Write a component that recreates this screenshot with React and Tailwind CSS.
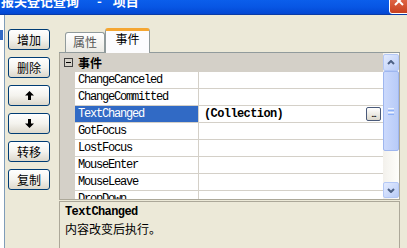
const ROWS = [
  'ChangeCanceled',
  'ChangeCommitted',
  'TextChanged',
  'GotFocus',
  'LostFocus',
  'MouseEnter',
  'MouseLeave',
  'DropDown',
]

const MONO = "font-['Liberation_Mono','Noto_Sans_CJK_SC',monospace]"

function XpButton({ children, className = '' }) {
  return (
    <div className={`w-[42px] h-[21px] flex items-center justify-center rounded-[3px] border border-[#003C74] bg-gradient-to-b from-white via-[#F4F3EE] to-[#DCD8CC] text-[12px] leading-none text-black ${className}`}>
      {children}
    </div>
  )
}

function Arrow({ down }) {
  return (
    <svg width="9" height="9" viewBox="0 0 9 9" className={down ? 'rotate-180' : ''}>
      <path d="M4.5 0 L9 4.5 H6 V9 H3 V4.5 H0 Z" fill="#000" />
    </svg>
  )
}

function ScrollBtn({ down, className = '' }) {
  return (
    <div className={`w-[16px] flex items-center justify-center rounded-[2px] border border-[#B4C8F6] bg-gradient-to-br from-[#E3EBFE] to-[#B9CCF7] ${className}`}>
      <svg width="8" height="5" viewBox="0 0 8 5">
        <path d={down ? 'M1 1 L4 4 L7 1' : 'M1 4 L4 1 L7 4'} fill="none" stroke="#4D6185" strokeWidth="2" />
      </svg>
    </div>
  )
}

export default function App() {
  return (
    <div className="w-[407px] h-[248px] overflow-hidden bg-[#ECE9D8] flex flex-col font-['Noto_Sans_CJK_SC',sans-serif] select-none">
      {/* title bar, its top is cut off */}
      <div className="relative h-[15px] shrink-0 overflow-hidden bg-gradient-to-b from-[#0B5EEB] via-[#0756E4] to-[#0447D2] border-b border-[#0A3BA6]">
        <div className="-mt-[8px] pl-[1px] flex whitespace-nowrap text-[13px] font-bold leading-[18px] text-white">
          <span>报关登记查询</span>
          <span className="ml-[18px]">-</span>
          <span className="ml-[11px]">项目</span>
        </div>
        <div className="absolute right-[-4px] top-[-7px] w-[22px] h-[21px] rounded-[3px] border border-white bg-gradient-to-b from-[#E97254] to-[#C8401E] flex items-center justify-center">
          <svg width="10" height="10" viewBox="0 0 10 10" className="-mt-[6px] -ml-[3px]">
            <path d="M1 1 L9 9 M9 1 L1 9" stroke="#fff" strokeWidth="2" />
          </svg>
        </div>
      </div>

      <div className="flex-1 flex min-h-0">
        {/* list box on the left, mostly off screen */}
        <div className="w-[5px] shrink-0 bg-white border-r border-[#7F9DB9]">
          <div className="mt-[15px] h-[10px] w-[3px] bg-[#316AC5]" />
        </div>

        {/* button column */}
        <div className="ml-[3px] pt-[14px] flex flex-col shrink-0">
          <XpButton>增加</XpButton>
          <XpButton className="mt-[7px] h-[20px]">删除</XpButton>
          <XpButton className="mt-[7px] h-[20px]"><Arrow /></XpButton>
          <XpButton className="mt-[7px]"><Arrow down /></XpButton>
          <XpButton className="mt-[7px] h-[20px]">转移</XpButton>
          <XpButton className="mt-[7px]">复制</XpButton>
        </div>

        {/* tab control */}
        <div className="ml-[9px] w-[341px] shrink-0 flex flex-col pt-[13px]">
          <div className="h-[24px] flex items-end pl-[6px]">
            <div className="w-[40px] h-[20px] rounded-t-[3px] border border-b-0 border-[#919B9C] bg-gradient-to-b from-white to-[#ECEBE5] text-center text-[12px] leading-[14px] pt-[2px] text-[#555]">
              属性
            </div>
            <div className="relative z-10 -mb-[1px] w-[45px] h-[25px] rounded-t-[3px] border-x border-[#919B9C] border-t-[3px] border-t-[#F5A631] bg-[#FCFCFE] text-center text-[12px] leading-[14px] pt-[1px] text-black">
              事件
            </div>
          </div>

          <div className="flex-1 flex flex-col border-t border-[#919B9C] min-h-0">
            {/* property grid */}
            <div className="h-[147px] shrink-0 flex border-l border-r border-b border-[#ACA899] bg-white">
              <div className="flex-1 overflow-hidden">
                <div className="h-[19px] flex items-center bg-[#D4D0C8]">
                  <div className="ml-[4px] w-[9px] h-[9px] border border-[#404040] bg-[#D4D0C8] flex items-center justify-center">
                    <div className="w-[5px] h-[1px] bg-black" />
                  </div>
                  <span className="ml-[5px] text-[12px] font-bold leading-none text-black">事件</span>
                </div>
                {ROWS.map(name => {
                  const sel = name === 'TextChanged'
                  return (
                    <div key={name} className="h-[17px] flex">
                      <div className="w-[15px] shrink-0 bg-[#D4D0C8]" />
                      <div className={`w-[124px] shrink-0 border-r border-b border-[#D4D0C8] pl-[3px] ${MONO} text-[12px] tracking-[-1.2px] leading-[16px] ${sel ? 'bg-[#316AC5] text-white' : 'text-black'}`}>
                        {name}
                      </div>
                      <div className="flex-1 border-b border-[#D4D0C8] flex items-center">
                        {sel && (
                          <>
                            <span className={`pl-[5px] ${MONO} text-[12px] tracking-[-0.6px] font-bold leading-[16px] text-black`}>(Collection)</span>
                            <div className="ml-auto mr-[2px] w-[15px] h-[14px] rounded-[2px] border border-[#4A5A7A] bg-gradient-to-b from-white to-[#DCD8CC] flex items-end justify-center pb-[2px]">
                              <span className="text-[9px] leading-none tracking-[-1px] text-black">...</span>
                            </div>
                          </>
                        )}
                      </div>
                    </div>
                  )
                })}
              </div>

              {/* vertical scrollbar */}
              <div className="w-[16px] shrink-0 flex flex-col bg-gradient-to-r from-[#F3F1EC] to-[#FEFEFB] pt-[1px] pb-[1px]">
                <ScrollBtn className="h-[17px]" />
                <div className="h-[80px] rounded-[2px] border border-[#9EB6EF] bg-gradient-to-r from-[#CBD9FC] to-[#B8CBF8] flex flex-col items-center justify-center gap-[1px]">
                  <div className="w-[6px] h-[1px] bg-[#EEF4FE]" />
                  <div className="w-[6px] h-[1px] bg-[#8CB0F8]" />
                  <div className="w-[6px] h-[1px] bg-[#EEF4FE]" />
                  <div className="w-[6px] h-[1px] bg-[#8CB0F8]" />
                </div>
                <div className="flex-1" />
                <ScrollBtn down className="h-[16px]" />
              </div>
            </div>

            {/* description pane */}
            <div className="mt-[1px] flex-1 border-t border-l border-r border-[#ACA899] bg-[#ECE9D8] pl-[5px] pt-[3px]">
              <div className={`${MONO} text-[12px] tracking-[-0.6px] font-bold leading-[14px] text-black`}>TextChanged</div>
              <div className="mt-[3px] text-[12px] leading-[14px] text-black">内容改变后执行。</div>
            </div>
          </div>
        </div>
      </div>
    </div>
  )
}
